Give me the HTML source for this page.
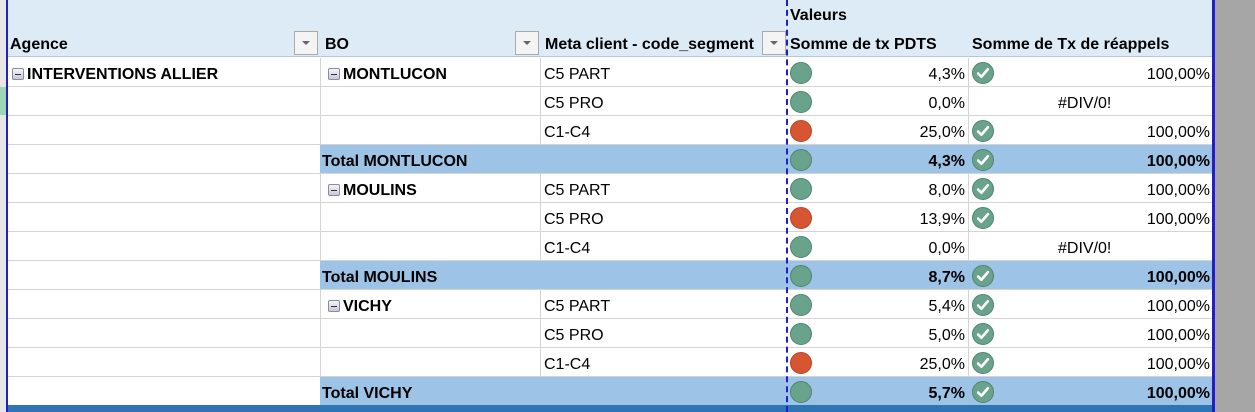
<!DOCTYPE html>
<html><head><meta charset="utf-8"><style>
*{margin:0;padding:0;box-sizing:border-box}
body{width:1255px;height:412px;overflow:hidden;background:#a6a6a6;font-family:"Liberation Sans",Arial,sans-serif;font-size:16px;color:#000;position:relative}
.lc{position:absolute;left:0;top:0;width:6px;height:412px;background:#e6e6e6}
.lg{position:absolute;left:0;top:87px;width:6px;height:28px;background:#9fd5b7}
.lb{position:absolute;left:6px;top:0;width:2px;height:412px;background:#1f1fd0}
.sheet{position:absolute;left:8px;top:0;width:1204px;height:405px;background:#fff}
.hdr{position:absolute;left:8px;top:0;width:1204px;height:57px;background:#ddebf7;border-bottom:1px solid #b4c6e7}
.row{position:absolute;left:8px;width:1204px;height:29px;border-bottom:1px solid #d4d4d4}
.c{position:absolute;top:1px;height:28px;line-height:31px;white-space:nowrap}
.v{position:absolute;top:0;width:1px;height:29px;background:#d4d4d4}
.tot{position:absolute;left:312px;top:0;width:892px;height:28px;background:#9dc3e6}
.b{font-weight:bold}
.dot{position:absolute;top:4px;width:22px;height:22px;border-radius:50%;background:#6aa38c;border:1px solid #4e8470}
.red{background:#d65533;border-color:#b84428}
.chk{position:absolute;top:4px;width:22px;height:22px;border-radius:50%;background:#6aa38c;border:1px solid #4e8470}
.chk svg{position:absolute;left:3px;top:3px}
.mn{display:inline-block;width:12px;height:12px;border:1px solid #8a8aa0;border-radius:2px;background:linear-gradient(#f4f4f8,#c8c8d8);position:relative;top:1px;margin-right:3px}
.mn:after{content:"";position:absolute;left:2px;top:5px;width:6px;height:1px;background:#333}
.dd{position:absolute;top:31px;width:24px;height:24px;border:1px solid #aaa;background:#f4f4f4}
.dd:after{content:"";position:absolute;left:7px;top:9px;border-left:4px solid transparent;border-right:4px solid transparent;border-top:4px solid #666}
.dash{position:absolute;left:786px;top:0;width:0;height:412px;border-left:2px dashed #1f1fd0}
.rb{position:absolute;left:1212px;top:0;width:3px;height:412px;background:#1f1fd0}
.bot{position:absolute;left:8px;top:405px;width:1204px;height:7px;background:#2e75b6}
</style></head><body>
<div class="lc"></div><div class="lg"></div>
<div class="sheet"></div>
<div class="hdr">
<div class="c b" style="left:782px;top:0px">Valeurs</div>
<div class="c b" style="left:2px;top:29px">Agence</div>
<div class="c b" style="left:317px;top:29px">BO</div>
<div class="c b" style="left:537px;top:29px;width:218px;overflow:hidden">Meta client - code_segment</div>
<div class="c b" style="left:782px;top:29px">Somme de tx PDTS</div>
<div class="c b" style="left:964px;top:29px">Somme de Tx de réappels</div>
</div>
<div class="dd" style="left:294px"></div>
<div class="dd" style="left:515px"></div>
<div class="dd" style="left:762px"></div>

<div id="rows"></div>
<script>
const data=[
["INTERVENTIONS ALLIER","MONTLUCON","C5 PART","4,3%",0,1,"100,00%"],
["","","C5 PRO","0,0%",0,0,"#DIV/0!"],
["","","C1-C4","25,0%",1,1,"100,00%"],
["T","Total MONTLUCON","","4,3%",0,1,"100,00%"],
["","MOULINS","C5 PART","8,0%",0,1,"100,00%"],
["","","C5 PRO","13,9%",1,1,"100,00%"],
["","","C1-C4","0,0%",0,0,"#DIV/0!"],
["T","Total MOULINS","","8,7%",0,1,"100,00%"],
["","VICHY","C5 PART","5,4%",0,1,"100,00%"],
["","","C5 PRO","5,0%",0,1,"100,00%"],
["","","C1-C4","25,0%",1,1,"100,00%"],
["T","Total VICHY","","5,7%",0,1,"100,00%"]];
let h="";
const ck='<svg width="14" height="14" viewBox="0 0 13 13"><path d="M2 7 L5 10 L11 3" stroke="#fff" stroke-width="2.4" fill="none" stroke-linecap="round" stroke-linejoin="round"/></svg>';
data.forEach((r,i)=>{
 const t=r[0]=="T";
 h+=`<div class="row" style="top:${58+29*i}px">`;
 h+=`<div class="v" style="left:312px"></div>`;
 if(t){h+=`<div class="tot"></div><div class="c b" style="left:314px">${r[1]}</div>`;}
 else{
  h+=`<div class="v" style="left:532px"></div><div class="v" style="left:960px"></div>`;
  if(r[0])h+=`<div class="c b" style="left:4px"><span class="mn"></span>${r[0]}</div>`;
  if(r[1])h+=`<div class="c b" style="left:320px"><span class="mn"></span>${r[1]}</div>`;
  h+=`<div class="c" style="left:536px">${r[2]}</div>`;
 }
 h+=`<div class="dot${r[4]?' red':''}" style="left:782px"></div>`;
 h+=`<div class="c${t?' b':''}" style="right:247px">${r[3]}</div>`;
 if(r[5]){h+=`<div class="chk" style="left:964px">${ck}</div><div class="c${t?' b':''}" style="right:2px">${r[6]}</div>`;}
 else h+=`<div class="c" style="left:1050px">${r[6]}</div>`;
 h+=`</div>`;
});
document.getElementById("rows").innerHTML=h;
</script>
<div class="bot"></div>
<div class="lb"></div>
<div class="dash"></div>
<div class="rb"></div>
</body></html>
